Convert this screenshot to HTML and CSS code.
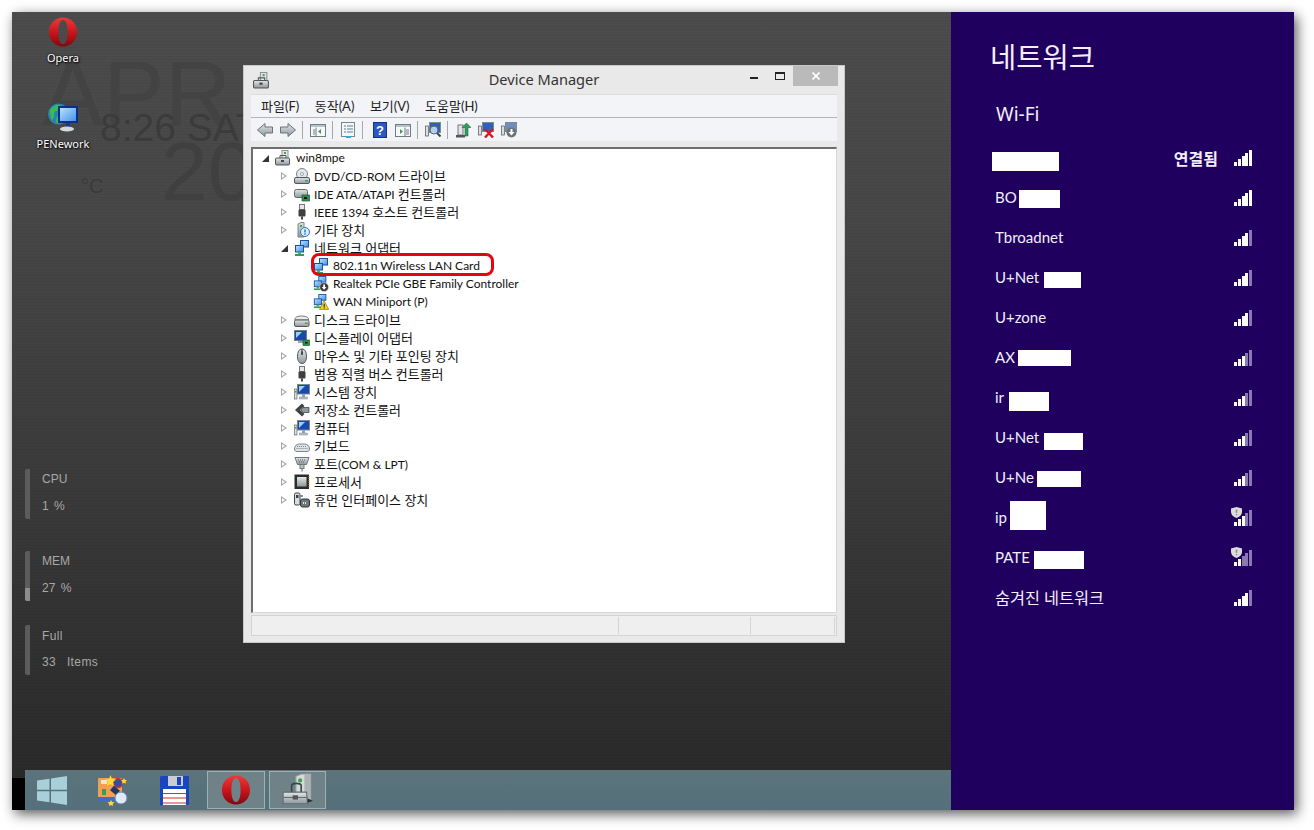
FILE: index.html
```html
<!DOCTYPE html>
<html lang="ko">
<head>
    <meta charset="UTF-8">
    <title>Device Manager</title>
    <link rel="stylesheet" href="styles.css">
</head>
<body>
    <svg class="svg-defs" aria-hidden="true">
        <defs>
            <linearGradient id="opera-red" x1="0" y1="0" x2="0" y2="1">
                <stop offset="0" stop-color="#ee3a36"/>
                <stop offset=".55" stop-color="#c4131a"/>
                <stop offset="1" stop-color="#7e0a0e"/>
            </linearGradient>
            <linearGradient id="screen-blue" x1="0" y1="0" x2="1" y2="1">
                <stop offset="0" stop-color="#bfe6ff"/>
                <stop offset="1" stop-color="#3c8fe8"/>
            </linearGradient>
            <linearGradient id="steel" x1="0" y1="0" x2="0" y2="1">
                <stop offset="0" stop-color="#e2e6e8"/>
                <stop offset="1" stop-color="#8d989e"/>
            </linearGradient>

            <symbol id="i-opera" viewBox="0 0 30 30">
                <path fill="url(#opera-red)" fill-rule="evenodd" d="M15 .5C6.700.5 1 6.900 1 15s5.700 14.500 14 14.500S29 23.100 29 15 23.300.5 15 .5zm0 2.400c3 0 4.600 5.400 4.600 12.100S18 27.100 15 27.100 10.400 21.700 10.400 15 12 2.900 15 2.900z"/>
            </symbol>
            <symbol id="i-host" viewBox="0 0 16 16">
                <rect x="7" y=".5" width="6" height="9" fill="#e6e9e9" stroke="#8a9296"/>
                <rect x="9" y="2" width="2" height="2" fill="#3fa34d"/>
                <path d="M5 8V5.500h6V8" fill="none" stroke="#555"/>
                <rect x=".5" y="8" width="14" height="7" rx="1" fill="url(#steel)" stroke="#555"/>
                <rect x="6" y="10" width="3" height="2" fill="#444"/>
            </symbol>
            <symbol id="i-tools" viewBox="0 0 30 32">
                <path d="M13 3l5-2h9v24H13z" fill="#d4d9d9" stroke="#8f9899"/>
                <path d="M21 1h6v24h-6z" fill="#aab2b4"/>
                <circle cx="17" cy="7" r="2" fill="#3fa34d"/>
                <path d="M9 18v-6c0-3 9-3 9 0v6" fill="none" stroke="#3c4446" stroke-width="1.500"/>
                <path d="M1 18h22l1 11H1z" fill="url(#steel)" stroke="#626c70"/>
                <path d="M1 23h23" stroke="#626c70"/>
                <rect x="10" y="21" width="5" height="4" fill="#555"/>
                <path d="M24 24l5 2-5 2z" fill="#2a2f31"/>
            </symbol>
            <symbol id="i-disc" viewBox="0 0 16 16">
                <circle cx="8" cy="6" r="5.500" fill="#e4e8ea" stroke="#77858b"/>
                <circle cx="8" cy="6" r="1.500" fill="#fff" stroke="#77858b" stroke-width=".7"/>
                <rect x=".5" y="9.500" width="15" height="6" rx="1.500" fill="url(#steel)" stroke="#555"/>
                <rect x="11" y="12" width="3" height="1.500" fill="#3fa34d"/>
            </symbol>
            <symbol id="i-ide" viewBox="0 0 16 16">
                <rect x=".5" y="3.500" width="13" height="8" rx="2" fill="url(#steel)" stroke="#666"/>
                <rect x="8" y="9" width="7.500" height="6" fill="#2f8f4a" stroke="#1d5d2f" stroke-width=".7"/>
                <rect x="10" y="11" width="3" height="2" fill="#111"/>
            </symbol>
            <symbol id="i-usb" viewBox="0 0 16 16">
                <rect x="5.500" y=".5" width="5" height="5" fill="#e4e8ea" stroke="#777"/>
                <rect x="4.500" y="5.500" width="7" height="7" rx="1" fill="#3d3f41"/>
                <rect x="7" y="12.500" width="2" height="3" fill="#444"/>
            </symbol>
            <symbol id="i-other" viewBox="0 0 16 16">
                <path d="M4 15V2l3-1.500h3V15z" fill="url(#steel)" stroke="#7b8488"/>
                <rect x="6" y="3" width="2" height="2" fill="#3fa34d"/>
                <circle cx="11" cy="10" r="4.500" fill="#dbeeff" stroke="#2e73c9"/>
                <rect x="10.300" y="7.500" width="1.500" height="3" fill="#2e73c9"/>
                <rect x="10.300" y="11.300" width="1.500" height="1.400" fill="#2e73c9"/>
            </symbol>
            <symbol id="i-net" viewBox="0 0 16 16">
                <rect x="6.500" y=".5" width="8" height="6.500" fill="url(#screen-blue)" stroke="#1d4f9f"/>
                <rect x="1.500" y="5.500" width="8" height="6.500" fill="url(#screen-blue)" stroke="#1d4f9f"/>
                <rect x="4" y="12" width="3" height="2" fill="#5aa868"/>
                <rect x="1" y="14" width="9" height="2" fill="#2f9e58"/>
            </symbol>
            <symbol id="i-net-down" viewBox="0 0 18 18">
                <use href="#i-net" width="16" height="16"/>
                <circle cx="12.500" cy="12.500" r="5" fill="#3a3a3a" stroke="#ddd" stroke-width=".7"/>
                <path d="M11.500 9.500h2v3h1.800l-2.800 3-2.800-3h1.800z" fill="#fff"/>
            </symbol>
            <symbol id="i-net-warn" viewBox="0 0 18 18">
                <use href="#i-net" width="16" height="16"/>
                <path d="M12.500 7.500l5.200 10H7.300z" fill="#f4d020" stroke="#8a6c00" stroke-width=".7"/>
                <rect x="12" y="11" width="1.200" height="3.500" fill="#222"/>
                <rect x="12" y="15" width="1.200" height="1.300" fill="#222"/>
            </symbol>
            <symbol id="i-disk" viewBox="0 0 16 16">
                <path d="M1 7c0-2 3-3 6.500-3S14.500 5 14.500 7v1H1z" fill="#e8ecee" stroke="#777"/>
                <rect x=".5" y="8" width="14.500" height="6.500" rx="1.500" fill="url(#steel)" stroke="#555"/>
                <rect x="11" y="10.500" width="2.500" height="1.500" fill="#3fa34d"/>
            </symbol>
            <symbol id="i-monitor" viewBox="0 0 16 16">
                <rect x=".5" y=".5" width="12" height="10" fill="#1848b0" stroke="#6f7d85"/>
                <path d="M2 2h6L2 8z" fill="#9fd0f4"/>
                <rect x="4" y="11" width="5" height="2" fill="#9aa5ab"/>
                <rect x="9" y="10" width="6.500" height="5.500" fill="#2f8f4a" stroke="#1d5d2f" stroke-width=".7"/>
                <rect x="11" y="12" width="2.500" height="1.500" fill="#111"/>
            </symbol>
            <symbol id="i-mouse" viewBox="0 0 16 16">
                <path d="M8 1c3 0 4.500 3 4.500 7.500 0 4-1.500 7-4.500 7s-4.500-3-4.500-7C3.500 4 5 1 8 1z" fill="url(#steel)" stroke="#555"/>
                <path d="M8 1v6" stroke="#333"/>
                <ellipse cx="8" cy="5" rx="1" ry="2" fill="#444"/>
            </symbol>
            <symbol id="i-sys" viewBox="0 0 16 16">
                <rect x="3.500" y=".5" width="12" height="9.500" fill="#1848b0" stroke="#7d8a90"/>
                <path d="M5 2h6l-6 6z" fill="#9fd0f4"/>
                <rect x="8" y="10" width="3" height="3" fill="#9aa5ab"/>
                <rect x="5.500" y="13" width="8" height="2" fill="#b9c2c6" stroke="#7d8a90" stroke-width=".5"/>
                <rect x=".5" y="5" width="2.500" height="10" fill="#d9dee0" stroke="#555" stroke-width=".6"/>
                <rect x="1" y="7" width="1.500" height="1.500" fill="#3fa34d"/>
            </symbol>
            <symbol id="i-storage" viewBox="0 0 16 16">
                <path d="M8 1.500L1 8l7 6.500 2.500-2.500L6 8l4.500-4z" fill="#3d4347"/>
                <path d="M9 5.500h6v5H9L7 8z" fill="#8f9a9f" stroke="#333" stroke-width=".7"/>
            </symbol>
            <symbol id="i-kbd" viewBox="0 0 16 16">
                <path d="M.5 11c0-3 2-5 5-5h5c3 0 5 2 5 5 0 1.500-1 2.500-2.500 2.500h-10C1.500 13.500.5 12.500.5 11z" fill="#dfe3e5" stroke="#7c868b"/>
                <path d="M3 8.500h10M2.500 10.500h11" stroke="#7c868b" stroke-dasharray="1 1"/>
            </symbol>
            <symbol id="i-port" viewBox="0 0 16 16">
                <path d="M1 1.500h14l-2.500 7h-9z" fill="url(#steel)" stroke="#6d777c"/>
                <path d="M4 4h8M5 6h6" stroke="#555" stroke-dasharray="1 1"/>
                <rect x="6" y="8.500" width="4" height="4" fill="#b9c2c6" stroke="#6d777c"/>
                <rect x="7.300" y="12.500" width="1.500" height="3" fill="#8a9398"/>
            </symbol>
            <symbol id="i-cpu" viewBox="0 0 16 16">
                <rect x=".5" y=".5" width="14.500" height="14.500" fill="#2c2c2a"/>
                <rect x="3" y="3" width="9.500" height="9.500" fill="url(#steel)"/>
                <path d="M15 2v12" stroke="#c39a2a" stroke-dasharray="1 1"/>
            </symbol>
            <symbol id="i-hid" viewBox="0 0 16 16">
                <rect x=".5" y="1" width="5.500" height="12" rx="1.500" fill="#d7dcde" stroke="#3d4347"/>
                <rect x="2" y="3" width="2.500" height="3" fill="#3d4347"/>
                <rect x="6" y="3" width="3" height="2" fill="#888"/>
                <rect x="6.500" y="7" width="9" height="8" rx="2" fill="#6d777c" stroke="#333"/>
                <path d="M9 11h4" stroke="#e4e8ea" stroke-width="2" stroke-dasharray="1 1"/>
            </symbol>

            <symbol id="t-back" viewBox="0 0 16 16">
                <path d="M.5 8L8 1.500V5h7.500v6H8v3.500z" fill="url(#steel)" stroke="#6b7276"/>
            </symbol>
            <symbol id="t-forward" viewBox="0 0 16 16">
                <path d="M15.500 8L8 1.500V5H.5v6H8v3.500z" fill="url(#steel)" stroke="#6b7276"/>
            </symbol>
            <symbol id="t-console" viewBox="0 0 16 16">
                <rect x=".5" y="2.500" width="15" height="12" fill="#f7f8f8" stroke="#6f7d85"/>
                <rect x="1" y="3" width="14" height="2" fill="#b9c2c6"/>
                <path d="M11 7v5l-3-2.500z" fill="#3aa04e"/>
                <path d="M6 5.500v9M3 8h2M3 10h2M3 12h2" stroke="#6f7d85"/>
            </symbol>
            <symbol id="t-props" viewBox="0 0 16 16">
                <rect x="1.500" y=".5" width="13" height="14" fill="#f5f6f6" stroke="#7d868a"/>
                <path d="M4 4h2M7 4h6M4 7h2M7 7h6M4 10h2M7 10h6" stroke="#5b7f9f"/>
                <rect x="6" y="14" width="5" height="2" fill="#35a8e0"/>
            </symbol>
            <symbol id="t-help" viewBox="0 0 16 16">
                <rect x="1.500" y=".5" width="13" height="15" fill="#2b57c0" stroke="#17328a"/>
                <text x="8" y="13" font-family="Liberation Sans" font-size="13" font-weight="bold" fill="#fff" text-anchor="middle">?</text>
            </symbol>
            <symbol id="t-action" viewBox="0 0 16 16">
                <rect x=".5" y="2.500" width="15" height="12" fill="#f7f8f8" stroke="#6f7d85"/>
                <rect x="1" y="3" width="14" height="2" fill="#b9c2c6"/>
                <path d="M5 7v5l3-2.500z" fill="#3aa04e"/>
                <path d="M10 5.500v9M11 8h3M11 10h3M11 12h3" stroke="#6f7d85"/>
            </symbol>
            <symbol id="t-scan" viewBox="0 0 16 16">
                <rect x="4.500" y=".5" width="11" height="10" fill="#2f5fc0" stroke="#7d8a90"/>
                <rect x=".5" y="4" width="3" height="10" fill="#d9dee0" stroke="#555" stroke-width=".7"/>
                <circle cx="9" cy="8" r="4" fill="#cfe8fb" fill-opacity=".8" stroke="#55636a"/>
                <path d="M12 11l3.500 3.500" stroke="#3d4347" stroke-width="2"/>
            </symbol>
            <symbol id="t-update" viewBox="0 0 16 16">
                <rect x="3" y="3" width="5" height="10" fill="#e1e5e7" stroke="#777"/>
                <rect x="1" y="13" width="9" height="2.500" fill="#555"/>
                <path d="M11.500 1L16 5.500h-3V14h-3V5.500H7z" fill="#2f9e58" stroke="#1c6c3a" stroke-width=".6"/>
            </symbol>
            <symbol id="t-disable" viewBox="0 0 16 16">
                <rect x="4.500" y=".5" width="11" height="9" fill="#2f5fc0" stroke="#7d8a90"/>
                <rect x=".5" y="4" width="3" height="9" fill="#d9dee0" stroke="#555" stroke-width=".7"/>
                <path d="M7 7l8 8.500M15 7l-8 8.500" stroke="#d8191c" stroke-width="2.400"/>
            </symbol>
            <symbol id="t-uninstall" viewBox="0 0 16 16">
                <rect x="4.500" y=".5" width="11" height="9" fill="#6c8fc0" stroke="#7d8a90"/>
                <rect x=".5" y="4" width="3" height="9" fill="#d9dee0" stroke="#555" stroke-width=".7"/>
                <circle cx="10.500" cy="10.500" r="5" fill="#6c7276"/>
                <path d="M9.500 7h2v3h2l-3 3.500-3-3.500h2z" fill="#fff"/>
            </symbol>
            <symbol id="i-shield" viewBox="0 0 11 11">
                <path d="M5.500 0L11 1.500v3.500c0 3-2.500 5-5.500 6C2.500 10 0 8 0 5V1.500z" fill="#dcdcdc"/>
                <rect x="4.700" y="2.500" width="1.600" height="3.500" fill="#8f8f8f"/>
                <rect x="4.700" y="7" width="1.600" height="1.400" fill="#8f8f8f"/>
            </symbol>
        </defs>
    </svg>

    <div class="screen">
        <div class="desktop">
            <div class="ghost ghost-month">APR</div>
            <div class="ghost ghost-time">8:26 SAT</div>
            <div class="ghost ghost-year">2013</div>
            <div class="ghost ghost-temp">°C</div>

            <div class="desk-icons">
                <div class="desk-icon">
                    <svg class="desk-glyph"><use href="#i-opera"/></svg>
                    <span>Opera</span>
                </div>
                <div class="desk-icon">
                    <svg class="desk-glyph" viewBox="0 0 30 30">
                        <circle cx="10.500" cy="11" r="10.500" fill="#2a86a8"/>
                        <path d="M2 7c3-4 7-6 10-5 2 3-1 6-4 6s-1 5-3 8-3-5-3-9zM9 14c3-1 5 1 4 4s-3 3-4 2-1-5 0-6z" fill="#3fb858"/>
                        <rect x="11" y="4" width="18" height="15" fill="url(#screen-blue)" stroke="#0a2f8c" stroke-width="2"/>
                        <rect x="18" y="20" width="4" height="4" fill="#123a96"/>
                        <ellipse cx="19" cy="26" rx="7" ry="2.500" fill="#d5d8da"/>
                    </svg>
                    <span>PENework</span>
                </div>
            </div>

            <div class="meters">
                <div class="meter meter-cpu">
                    <div class="meter-bar"></div>
                    <div class="meter-text"><span>CPU</span><span>1 %</span></div>
                </div>
                <div class="meter meter-mem">
                    <div class="meter-bar"><div class="meter-fill"></div></div>
                    <div class="meter-text"><span>MEM</span><span>27 %</span></div>
                </div>
                <div class="meter meter-full">
                    <div class="meter-bar"></div>
                    <div class="meter-text"><span>Full</span><span>33 Items</span></div>
                </div>
            </div>

            <div class="window">
                <div class="titlebar">
                    <svg class="title-icon"><use href="#i-host"/></svg>
                    <div class="title-text">Device Manager</div>
                    <div class="title-buttons">
                        <div class="btn-min"></div>
                        <div class="btn-max"></div>
                        <div class="btn-close">
                            <svg width="8" height="8" viewBox="0 0 8 8"><path d="M.5.5l7 7M7.500.5l-7 7" stroke="#fff" stroke-width="1.600"/></svg>
                        </div>
                    </div>
                </div>
                <div class="menubar">
                    <span class="menu-item">파일(F)</span>
                    <span class="menu-item">동작(A)</span>
                    <span class="menu-item">보기(V)</span>
                    <span class="menu-item">도움말(H)</span>
                </div>
                <div class="toolbar">
                    <svg class="tool"><use href="#t-back"/></svg>
                    <svg class="tool"><use href="#t-forward"/></svg>
                    <i class="tool-sep"></i>
                    <svg class="tool"><use href="#t-console"/></svg>
                    <i class="tool-sep"></i>
                    <svg class="tool"><use href="#t-props"/></svg>
                    <i class="tool-sep"></i>
                    <svg class="tool tool-help"><use href="#t-help"/></svg>
                    <svg class="tool"><use href="#t-action"/></svg>
                    <i class="tool-sep"></i>
                    <svg class="tool"><use href="#t-scan"/></svg>
                    <i class="tool-sep"></i>
                    <svg class="tool"><use href="#t-update"/></svg>
                    <svg class="tool"><use href="#t-disable"/></svg>
                    <svg class="tool"><use href="#t-uninstall"/></svg>
                </div>
                <div class="tree">
                    <div class="row root"><i class="arrow open"></i><svg class="ico"><use href="#i-host"/></svg><span>win8mpe</span></div>
                    <div class="row"><i class="arrow"></i><svg class="ico"><use href="#i-disc"/></svg><span>DVD/CD-ROM <span class="ko">드라이브</span></span></div>
                    <div class="row"><i class="arrow"></i><svg class="ico"><use href="#i-ide"/></svg><span>IDE ATA/ATAPI <span class="ko">컨트롤러</span></span></div>
                    <div class="row"><i class="arrow"></i><svg class="ico"><use href="#i-usb"/></svg><span>IEEE 1394 <span class="ko">호스트 컨트롤러</span></span></div>
                    <div class="row"><i class="arrow"></i><svg class="ico"><use href="#i-other"/></svg><span class="ko">기타 장치</span></div>
                    <div class="row"><i class="arrow open"></i><svg class="ico"><use href="#i-net"/></svg><span class="ko">네트워크 어댑터</span></div>
                    <div class="row child marked"><i class="arrow none"></i><svg class="ico"><use href="#i-net"/></svg><span>802.11n Wireless LAN Card</span></div>
                    <div class="row child"><i class="arrow none"></i><svg class="ico"><use href="#i-net-down"/></svg><span>Realtek PCIe GBE Family Controller</span></div>
                    <div class="row child"><i class="arrow none"></i><svg class="ico"><use href="#i-net-warn"/></svg><span>WAN Miniport (P)</span></div>
                    <div class="row"><i class="arrow"></i><svg class="ico"><use href="#i-disk"/></svg><span class="ko">디스크 드라이브</span></div>
                    <div class="row"><i class="arrow"></i><svg class="ico"><use href="#i-monitor"/></svg><span class="ko">디스플레이 어댑터</span></div>
                    <div class="row"><i class="arrow"></i><svg class="ico"><use href="#i-mouse"/></svg><span class="ko">마우스 및 기타 포인팅 장치</span></div>
                    <div class="row"><i class="arrow"></i><svg class="ico"><use href="#i-usb"/></svg><span class="ko">범용 직렬 버스 컨트롤러</span></div>
                    <div class="row"><i class="arrow"></i><svg class="ico"><use href="#i-sys"/></svg><span class="ko">시스템 장치</span></div>
                    <div class="row"><i class="arrow"></i><svg class="ico"><use href="#i-storage"/></svg><span class="ko">저장소 컨트롤러</span></div>
                    <div class="row"><i class="arrow"></i><svg class="ico"><use href="#i-sys"/></svg><span class="ko">컴퓨터</span></div>
                    <div class="row"><i class="arrow"></i><svg class="ico"><use href="#i-kbd"/></svg><span class="ko">키보드</span></div>
                    <div class="row"><i class="arrow"></i><svg class="ico"><use href="#i-port"/></svg><span><span class="ko">포트</span>(COM &amp; LPT)</span></div>
                    <div class="row"><i class="arrow"></i><svg class="ico"><use href="#i-cpu"/></svg><span class="ko">프로세서</span></div>
                    <div class="row"><i class="arrow"></i><svg class="ico"><use href="#i-hid"/></svg><span class="ko">휴먼 인터페이스 장치</span></div>
                </div>
                <div class="statusbar">
                    <div></div>
                    <div></div>
                    <div></div>
                </div>
            </div>

            <div class="taskbar-wrap">
                <div class="task-corner"></div>
                <div class="taskbar">
                    <svg class="task-win" viewBox="0 0 30 29">
                        <path d="M0 4.500l12.500-1.800v11H0zM14 2.400L30 0v13.700H14zM0 15.300h12.500v11L0 24.500zM14 15.300h16V29l-16-2.400z" fill="#a9d0d8"/>
                    </svg>
                    <svg class="task-launcher" viewBox="0 0 31 31">
                        <rect x="1" y="3" width="24" height="23" rx="1" fill="#f0a050"/>
                        <rect x="1" y="22" width="24" height="4" fill="#3f6fc0"/>
                        <rect x="4" y="5" width="6" height="4" fill="#f4e7d0"/>
                        <rect x="5" y="14" width="4" height="6" fill="#3aa04e"/>
                        <circle cx="21" cy="8" r="4.500" fill="#2f4f9f" stroke="#c43a3a" stroke-width="1.500"/>
                        <path d="M12 4l1.500-4 1.500 4 4 .5-3 2.500 1 4-3.500-2-3.500 2 1-4-3-2.500z" fill="#ffd83a"/>
                        <path d="M27 3l1 2 2 .3-1.500 1.500.4 2-1.900-1-1.900 1 .4-2L24 5.300l2-.3z" fill="#ffd83a"/>
                        <path d="M14 25l1 2 2.500.3-1.800 1.700.4 2-2.100-1.100-2.100 1.100.4-2-1.800-1.700 2.500-.3z" fill="#ffd83a"/>
                        <path d="M15 13l6 5" stroke="#26365f" stroke-width="6"/>
                        <circle cx="24" cy="23" r="6" fill="#dfeaf8" stroke="#6d86b0"/>
                    </svg>
                    <svg class="task-floppy" viewBox="0 0 29 31">
                        <path d="M1 1h27a1 1 0 0 1 1 1v27a1 1 0 0 1-1 1H2a1 1 0 0 1-2-1V2z" fill="#1b45c0"/>
                        <rect x="8" y="1" width="15" height="10" fill="#c9ccd2"/>
                        <rect x="17" y="2" width="4" height="8" fill="#1b45c0"/>
                        <rect x="3" y="14" width="23" height="16" fill="#fff"/>
                        <path d="M3 18.500h23M3 23h23M3 28h23" stroke="#c8323a" stroke-width="1.200"/>
                    </svg>
                    <div class="task-btn task-opera">
                        <svg class="task-btn-glyph"><use href="#i-opera"/></svg>
                    </div>
                    <div class="task-btn task-tools">
                        <svg class="task-btn-glyph"><use href="#i-tools"/></svg>
                    </div>
                </div>
            </div>
        </div>

        <aside class="charm">
            <h1 class="charm-title">네트워크</h1>
            <h2 class="charm-sub">Wi-Fi</h2>
            <ul class="nets">
                <li class="net">
                    <span class="net-name"><i class="mask mask-a"></i></span>
                    <b class="net-state">연결됨</b>
                    <span class="signal"><i></i><i></i><i></i><i></i><i></i></span>
                </li>
                <li class="net">
                    <span class="net-name">BO<i class="mask mask-b"></i></span>
                    <span class="signal"><i></i><i></i><i></i><i></i><i></i></span>
                </li>
                <li class="net">
                    <span class="net-name">Tbroadnet</span>
                    <span class="signal lvl-4"><i></i><i></i><i></i><i></i><i></i></span>
                </li>
                <li class="net">
                    <span class="net-name">U+Net<i class="mask mask-c"></i></span>
                    <span class="signal lvl-4"><i></i><i></i><i></i><i></i><i></i></span>
                </li>
                <li class="net">
                    <span class="net-name">U+zone</span>
                    <span class="signal lvl-4"><i></i><i></i><i></i><i></i><i></i></span>
                </li>
                <li class="net">
                    <span class="net-name">AX<i class="mask mask-d"></i></span>
                    <span class="signal lvl-3"><i></i><i></i><i></i><i></i><i></i></span>
                </li>
                <li class="net">
                    <span class="net-name">ir<i class="mask mask-e"></i></span>
                    <span class="signal lvl-3"><i></i><i></i><i></i><i></i><i></i></span>
                </li>
                <li class="net">
                    <span class="net-name">U+Net<i class="mask mask-f"></i></span>
                    <span class="signal lvl-3"><i></i><i></i><i></i><i></i><i></i></span>
                </li>
                <li class="net">
                    <span class="net-name">U+Ne<i class="mask mask-g"></i></span>
                    <span class="signal lvl-3"><i></i><i></i><i></i><i></i><i></i></span>
                </li>
                <li class="net">
                    <span class="net-name">ip<i class="mask mask-h"></i></span>
                    <span class="signal lvl-3"><svg class="shield"><use href="#i-shield"/></svg><i></i><i></i><i></i><i></i><i></i></span>
                </li>
                <li class="net">
                    <span class="net-name">PATE<i class="mask mask-i"></i></span>
                    <span class="signal lvl-2"><svg class="shield"><use href="#i-shield"/></svg><i></i><i></i><i></i><i></i><i></i></span>
                </li>
                <li class="net">
                    <span class="net-name net-name-ko">숨겨진 네트워크</span>
                    <span class="signal lvl-4"><i></i><i></i><i></i><i></i><i></i></span>
                </li>
            </ul>
        </aside>
    </div>
</body>
</html>
```

FILE: styles.css
```css
* {
    box-sizing: border-box;
}

body {
    margin: 0;
    height: 830px;
    padding: 12px 20px 20px 12px;
    background-color: #fff;
    font-family: "Noto Sans", "Noto Sans CJK KR", sans-serif;
    overflow: hidden;
}

.svg-defs {
    position: absolute;
    width: 0;
    height: 0;
}

.screen {
    display: flex;
    width: 1282px;
    height: 798px;
    box-shadow: 3px 4px 12px rgba(0, 0, 0, 0.65);
}

/* desktop */

.desktop {
    position: relative;
    width: 939px;
    overflow: hidden;
    background-color: #383838;
    background-image:
        repeating-linear-gradient(0deg, rgba(0, 0, 0, 0.04) 0 1px, transparent 1px 3px),
        linear-gradient(180deg, #4c4c4c 0%, #474747 25%, #3a3a3a 60%, #282828 100%);
}

.ghost {
    position: absolute;
    font-family: "Liberation Sans", sans-serif;
    line-height: 1;
    white-space: nowrap;
}

.ghost-month {
    left: 30px;
    top: 36px;
    font-size: 92px;
    color: #434343;
}

.ghost-time {
    left: 88px;
    top: 96px;
    font-size: 39px;
    color: #3b3b3b;
}

.ghost-year {
    left: 149px;
    top: 117px;
    font-size: 84px;
    color: #404040;
}

.ghost-temp {
    left: 69px;
    top: 164px;
    font-size: 20px;
    color: #3a3a3a;
}

.desk-icons {
    position: absolute;
    left: 22px;
    top: 5px;
    width: 58px;
}

.desk-icon {
    display: flex;
    flex-direction: column;
    align-items: center;
    height: 86px;
    color: #fff;
    font-size: 11px;
    line-height: 16px;
    text-shadow: 1px 1px 2px #000, 0 0 2px #000;
}

.desk-glyph {
    width: 30px;
    height: 30px;
    margin-bottom: 3px;
}

.meters {
    position: absolute;
    left: 13px;
    top: 457px;
    display: flex;
    flex-direction: column;
    color: #a8a8a8;
    font-family: "Liberation Sans", sans-serif;
    font-size: 12px;
}

.meter {
    display: flex;
    height: 50px;
}

.meter-mem {
    margin-top: 32px;
}

.meter-full {
    margin-top: 24px;
    letter-spacing: 0.4px;
}

.meter-bar {
    display: flex;
    align-items: flex-end;
    width: 5px;
    margin-right: 12px;
    overflow: hidden;
    border-radius: 2px 0 0 2px;
    background-color: #5c5c5c;
}

.meter-fill {
    width: 100%;
    height: 13px;
    background-color: #8c8c8c;
}

.meter-text {
    display: flex;
    flex-direction: column;
    gap: 13px;
    padding-top: 3px;
    line-height: 14px;
    word-spacing: 2px;
}

.meter-full .meter-text {
    gap: 12px;
    padding-top: 4px;
    word-spacing: 7px;
}

/* device manager window */

.window {
    position: absolute;
    left: 231px;
    top: 53px;
    display: flex;
    flex-direction: column;
    width: 602px;
    height: 578px;
    padding: 0 7px 6px;
    border: 1px solid #c8c8c8;
    background-color: #e9e9e9;
}

.titlebar {
    display: grid;
    grid-template-columns: 1fr auto 1fr;
    align-items: center;
    flex: none;
    height: 28px;
    margin: 0 -7px;
}

.title-icon {
    width: 17px;
    height: 17px;
    margin-left: 9px;
}

.title-text {
    padding-bottom: 2px;
    color: #333;
    font-size: 14.600px;
    line-height: 26px;
}

.title-buttons {
    display: flex;
    align-items: flex-start;
    justify-content: flex-end;
    align-self: start;
    padding-right: 6px;
}

.btn-min {
    width: 8px;
    height: 2px;
    margin-top: 11px;
    background-color: #222;
}

.btn-max {
    width: 10px;
    height: 8px;
    margin: 6px 8px 0 17px;
    border: 1px solid #222;
    border-top-width: 2px;
}

.btn-close {
    display: flex;
    align-items: center;
    justify-content: center;
    width: 45px;
    height: 20px;
    background-color: #bababa;
}

.menubar {
    display: flex;
    flex: none;
    align-items: center;
    height: 24px;
    padding: 0 0 2px 10px;
    border-top: 1px solid #dcdcdc;
    border-bottom: 1px solid #b4b4b4;
    background-color: #f3f4f7;
    color: #222;
    font-family: "Lato", "Noto Sans CJK KR", sans-serif;
    font-size: 13px;
}

.menu-item {
    margin-right: 15.500px;
}

.toolbar {
    display: flex;
    flex: none;
    align-items: center;
    gap: 7px;
    height: 23px;
    padding: 1px 0 0 6px;
    background-color: #f3f4f7;
}

.tool {
    width: 16px;
    height: 16px;
}

.tool-sep {
    width: 1px;
    height: 18px;
    margin-left: -1px;
    background-color: #a8a8a8;
}

.tool-help {
    margin-left: 2px;
}

.tree {
    flex: 1;
    margin-top: 6px;
    border: 1px solid #d8d8d8;
    border-top: 2px solid #6e6e6e;
    border-left: 2px solid #6e6e6e;
    background-color: #fff;
    color: #111;
    font-family: "Lato", "Noto Sans CJK KR", sans-serif;
    font-size: 12px;
}

.ko {
    font-size: 13px;
}

.row {
    position: relative;
    display: flex;
    align-items: center;
    height: 18px;
    padding-left: 28px;
    line-height: 18px;
    white-space: nowrap;
}

.row.root {
    padding-left: 9px;
}

.row.root .ico {
    margin-right: 5px;
}

.row.child {
    padding-left: 47px;
}

.row.marked::after {
    content: "";
    position: absolute;
    left: 58px;
    top: -4px;
    width: 177px;
    height: 17px;
    border: 3px solid #e4060f;
    border-radius: 8px;
}

.arrow {
    position: relative;
    flex: none;
    width: 13px;
    height: 9px;
}

.arrow::before {
    content: "";
    position: absolute;
    left: 0;
    top: 0;
    border-style: solid;
    border-width: 4.5px 0 4.5px 6px;
    border-color: transparent transparent transparent #a6a6a6;
}

.arrow::after {
    content: "";
    position: absolute;
    left: 1px;
    top: 2px;
    border-style: solid;
    border-width: 2.5px 0 2.5px 3.5px;
    border-color: transparent transparent transparent #fff;
}

.arrow.open::before {
    top: 1px;
    border-width: 0 0 7px 7px;
    border-color: transparent transparent #333 transparent;
}

.arrow.open::after,
.arrow.none::before,
.arrow.none::after {
    display: none;
}

.ico {
    flex: none;
    width: 16px;
    height: 16px;
    margin-right: 4px;
    overflow: visible;
}

.statusbar {
    display: grid;
    grid-template-columns: 367px 132px 84px;
    flex: none;
    height: 21px;
    margin-top: 2px;
    padding: 1px 0;
    border: 1px solid #d4d4d4;
    background-color: #efefef;
}

.statusbar div {
    border-right: 1px solid #d4d4d4;
}

/* taskbar */

.taskbar-wrap {
    position: absolute;
    left: 0;
    bottom: 0;
    display: flex;
    align-items: flex-end;
    width: 939px;
}

.task-corner {
    flex: none;
    width: 13px;
    height: 32px;
    background-color: #000;
}

.taskbar {
    display: flex;
    flex: 1;
    align-items: center;
    height: 40px;
    background: linear-gradient(180deg, #5b747c 0%, #55707a 100%);
}

.task-win {
    flex: none;
    width: 30px;
    height: 29px;
    margin-left: 12px;
}

.task-launcher {
    flex: none;
    width: 31px;
    height: 31px;
    margin-left: 30px;
}

.task-floppy {
    flex: none;
    width: 29px;
    height: 31px;
    margin-left: 32px;
}

.task-btn {
    display: flex;
    flex: none;
    align-items: center;
    justify-content: center;
    height: 38px;
    border: 1px solid #9db0b4;
    background-color: #6f8288;
}

.task-opera {
    width: 58px;
    margin-left: 18px;
}

.task-tools {
    width: 57px;
    margin-left: 4px;
}

.task-btn-glyph {
    width: 30px;
    height: 30px;
}

.task-tools .task-btn-glyph {
    width: 34px;
    height: 34px;
}

/* network charm */

.charm {
    width: 343px;
    padding: 25px 42px 0 0;
    background-color: #20005f;
    color: #f2eff8;
}

.charm-title {
    height: 40px;
    margin: 0 0 0 39px;
    font-size: 28.500px;
    font-weight: 400;
    line-height: 40px;
}

.charm-sub {
    height: 30px;
    margin: 22px 0 9px 45px;
    font-size: 19px;
    font-weight: 400;
    line-height: 30px;
}

.nets {
    margin: 0;
    padding: 0;
    list-style: none;
}

.net {
    display: flex;
    align-items: center;
    height: 40px;
    padding-left: 44px;
    font-family: "Lato", "Noto Sans CJK KR", sans-serif;
    font-size: 15px;
}

.net-name {
    display: flex;
    flex: 1;
    align-items: center;
    padding-bottom: 2px;
    white-space: nowrap;
}

.net-name-ko {
    font-size: 16.300px;
}

.net-state {
    margin-right: 16px;
    font-size: 16px;
}

.mask {
    display: block;
    background-color: #fff;
}

.mask-a { width: 67px; height: 19px; margin: 8px 0 0 -3px; }
.mask-b { width: 41px; height: 18px; margin: 4px 0 0 2px; }
.mask-c { width: 37px; height: 16px; margin: 6px 0 0 5px; }
.mask-d { width: 53px; height: 16px; margin: 2px 0 0 3px; }
.mask-e { width: 40px; height: 19px; margin: 9px 0 0 4.500px; }
.mask-f { width: 39px; height: 17px; margin: 8px 0 0 5px; }
.mask-g { width: 44px; height: 16px; margin: 4px 0 0 3.500px; }
.mask-h { width: 36px; height: 29px; margin: -3px 0 0 2.500px; }
.mask-i { width: 50px; height: 18px; margin: 6px 0 0 4.500px; }

.signal {
    position: relative;
    display: flex;
    flex: none;
    align-items: flex-end;
    justify-content: space-between;
    width: 18px;
    height: 16px;
}

.signal i {
    display: block;
    width: 3px;
    background-color: #fff;
}

.signal i:nth-of-type(1) { height: 4px; }
.signal i:nth-of-type(2) { height: 7px; }
.signal i:nth-of-type(3) { height: 10px; }
.signal i:nth-of-type(4) { height: 13px; }
.signal i:nth-of-type(5) { height: 16px; }

.lvl-4 i:nth-of-type(5),
.lvl-3 i:nth-of-type(n+4),
.lvl-2 i:nth-of-type(n+3) {
    background-color: #8a78b4;
}

.shield {
    position: absolute;
    left: -3px;
    top: -3px;
    width: 11px;
    height: 11px;
}
```
